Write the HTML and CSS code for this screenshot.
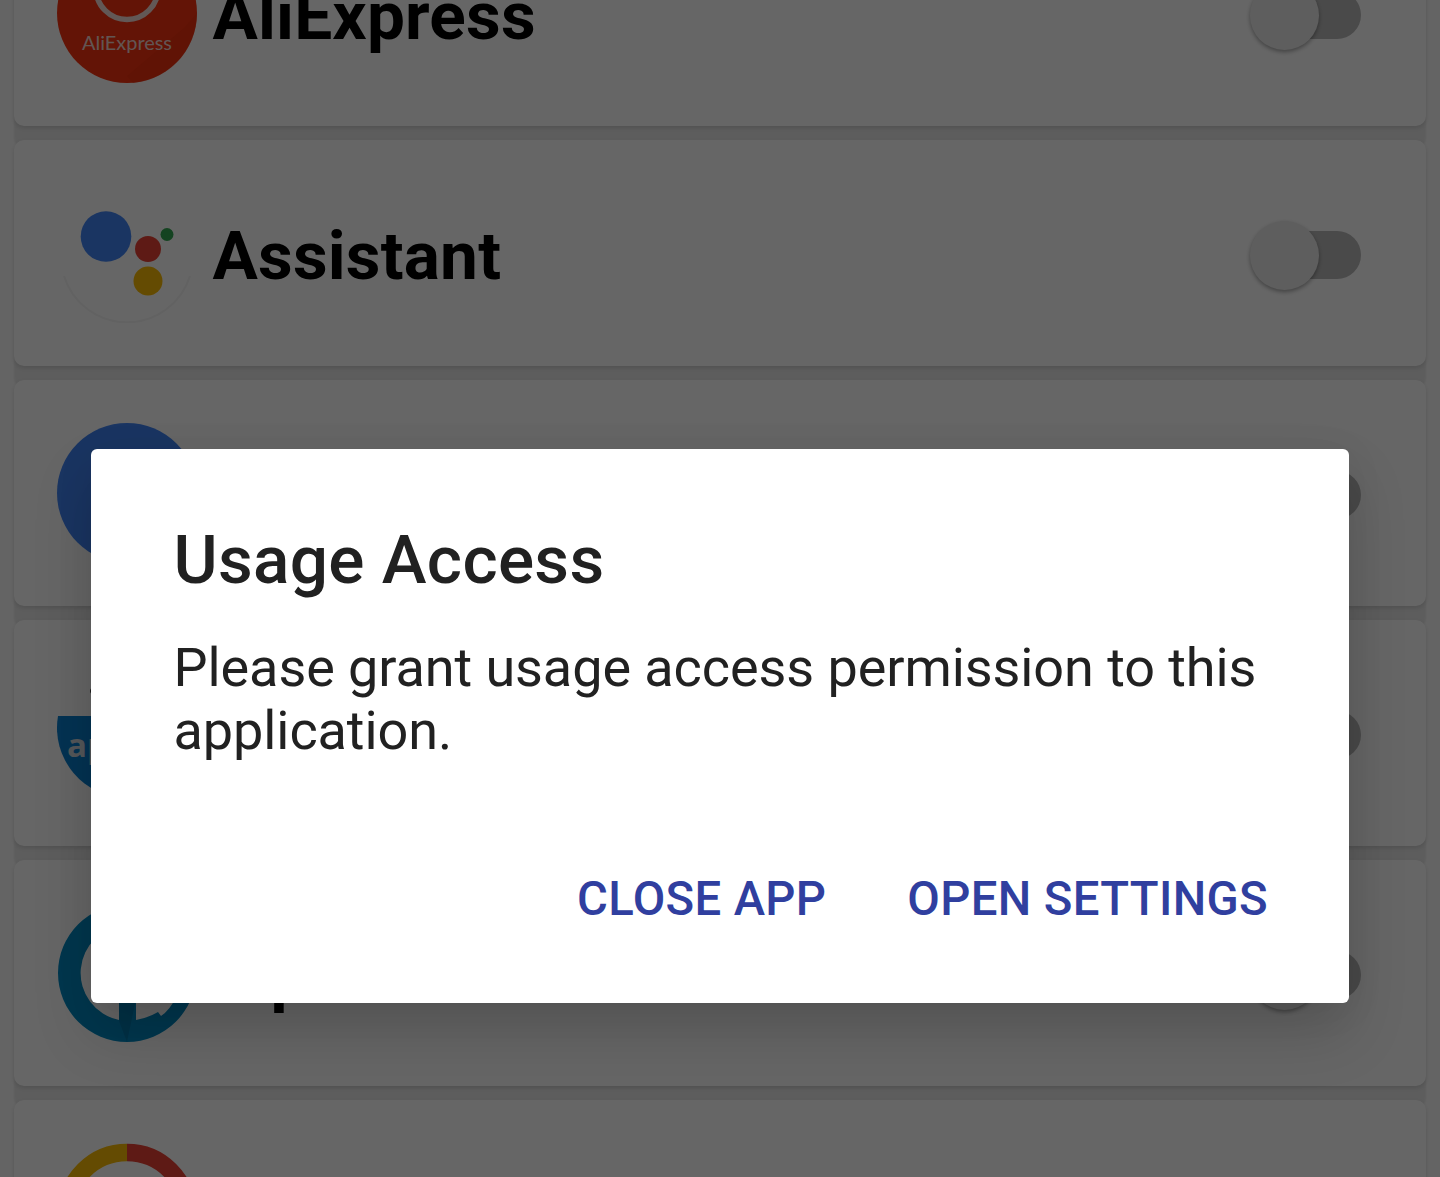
FILE: index.html
```html
<!DOCTYPE html>
<html lang="en">
<head>
<meta charset="utf-8">
<title>Usage Access</title>
<link rel="stylesheet" href="styles.css">
</head>
<body>
<main class="screen">
  <ul class="app-list">
    <li class="card">
      <svg class="icon" viewBox="0 0 140 140">
        <circle cx="70" cy="70" r="70" fill="#f8330f"/>
        <path d="M140 70A70 70 0 0 1 76 140L70 133L128 84Z" fill="#e02c0c" opacity=".35"/>
        <circle cx="70" cy="45.500" r="31" fill="none" stroke="#f4dcd8" stroke-width="5.500"/>
        <text class="ali-text" x="25" y="106.500" textLength="90" lengthAdjust="spacingAndGlyphs">AliExpress</text>
      </svg>
      <span class="name">AliExpress</span>
      <span class="switch"></span>
    </li>
    <li class="card">
      <svg class="icon" viewBox="0 0 140 140">
        <path d="M7 93A66 66 0 0 0 133 93" fill="none" stroke="#f5f5f5" stroke-width="2"/>
        <circle cx="49" cy="53.500" r="25.300" fill="#4285f4"/>
        <circle cx="91" cy="66" r="13" fill="#ea4335"/>
        <circle cx="91" cy="98" r="14.500" fill="#fbbc05"/>
        <circle cx="110" cy="51.500" r="6.500" fill="#34a853"/>
      </svg>
      <span class="name">Assistant</span>
      <span class="switch"></span>
    </li>
    <li class="card">
      <svg class="icon" viewBox="0 0 140 140">
        <circle cx="70" cy="70" r="70" fill="#4285f4"/>
      </svg>
      <span class="name"></span>
      <span class="switch"></span>
    </li>
    <li class="card">
      <svg class="icon" viewBox="0 0 140 140">
        <circle cx="36" cy="28" r="3" fill="#444"/>
        <path d="M1 53H139A70 70 0 1 1 1 53Z" fill="#0c80d0"/>
        <text class="ap-text" x="10" y="94">ap</text>
      </svg>
      <span class="name"></span>
      <span class="switch"></span>
    </li>
    <li class="card">
      <svg class="icon" viewBox="0 0 140 140">
        <path fill-rule="evenodd" fill="#008bc4" d="M70 1A69 69 0 1 1 70 139A69 69 0 1 1 70 1ZM70 22A48 48 0 0 0 62 117V60H79V117Q91 115 101 109L104 113Q113 107 119 94L118 70A48 48 0 0 0 70 22Z"/>
        <path d="M62 96H79L70 139L62 118Z" fill="#006d9e" opacity=".55"/>
      </svg>
      <span class="name name-tight">Bip</span>
      <span class="switch"></span>
    </li>
    <li class="card">
      <svg class="icon" viewBox="0 0 140 140">
        <path d="M70 9.500A61 61 0 0 0 9 70" fill="none" stroke="#fbbc05" stroke-width="17.500"/>
        <path d="M70 9.500A61 61 0 0 1 131 70" fill="none" stroke="#ea4335" stroke-width="17.500"/>
      </svg>
      <span class="name"></span>
      <span class="switch"></span>
    </li>
  </ul>
  <div class="scrim">
    <section class="dialog" role="dialog">
      <h1 class="dialog-title">Usage Access</h1>
      <p class="dialog-body">Please grant usage access permission to this application.</p>
      <div class="actions">
        <button class="action close">CLOSE APP</button>
        <button class="action open">OPEN SETTINGS</button>
      </div>
    </section>
  </div>
</main>
</body>
</html>
```
FILE: styles.css
```css
* { box-sizing: border-box; }

body {
  margin: 0;
  font-family: Roboto, "Liberation Sans", sans-serif;
}

.screen {
  position: relative;
  height: 1177px;
  overflow: hidden;
  background: #fafafa;
}

.app-list {
  display: flex;
  flex-direction: column;
  gap: 14px;
  margin: -100px 0 0;
  padding: 0 14px;
  list-style: none;
}

.card {
  flex: none;
  display: flex;
  align-items: center;
  height: 226px;
  padding: 0 65px 0 43px;
  border-radius: 10px;
  background: #fff;
  box-shadow: 0 2px 4px rgba(0, 0, 0, .12), 0 22px 2px rgba(0, 0, 0, .07);
}

.icon {
  flex: none;
  width: 140px;
  height: 140px;
}

.ali-text {
  font: 20px Lato, sans-serif;
  fill: #f6d5cf;
}

.ap-text {
  font: 700 33px "Open Sans", sans-serif;
  fill: #d4dce2;
}

.name {
  flex: 1;
  margin: 4px 0 0 15.5px;
  font-size: 67.5px;
  font-weight: 700;
  line-height: 79px;
  letter-spacing: .2px;
  color: #000;
}

.name-tight { letter-spacing: -1.5px; }

.switch {
  display: flex;
  align-items: center;
  width: 108px;
  height: 48px;
  margin-top: 3px;
  border-radius: 24px;
  background: #b9b9b9;
}

.switch::before {
  content: "";
  flex: none;
  width: 69px;
  height: 69px;
  margin: 2px 0 0 -3px;
  border-radius: 50%;
  background: #ececec;
  box-shadow: 0 2px 4px rgba(0, 0, 0, .35);
}

.scrim {
  position: absolute;
  inset: 0;
  padding: 449.4px 91px 0;
  background: rgba(0, 0, 0, .6);
}

.dialog {
  height: 554px;
  padding: 70.2px 81px 0 82.5px;
  border-radius: 6px;
  background: #fff;
  box-shadow: 0 30px 60px rgba(0, 0, 0, .16), 0 6px 40px rgba(0, 0, 0, .06);
}

.dialog-title {
  margin: 0 0 37.8px;
  font-size: 67.5px;
  font-weight: 500;
  line-height: 79px;
  letter-spacing: .3px;
  color: #212121;
}

.dialog-body {
  margin: 0 -20px 109px 0;
  font-size: 54px;
  line-height: 63px;
  letter-spacing: -.08px;
  color: #212121;
}

.actions {
  display: flex;
  justify-content: flex-end;
  gap: 81px;
}

.action {
  padding: 0;
  border: 0;
  background: none;
  font: 500 47.25px/56px Roboto, sans-serif;
  letter-spacing: .35px;
  color: #303f9f;
}
```
